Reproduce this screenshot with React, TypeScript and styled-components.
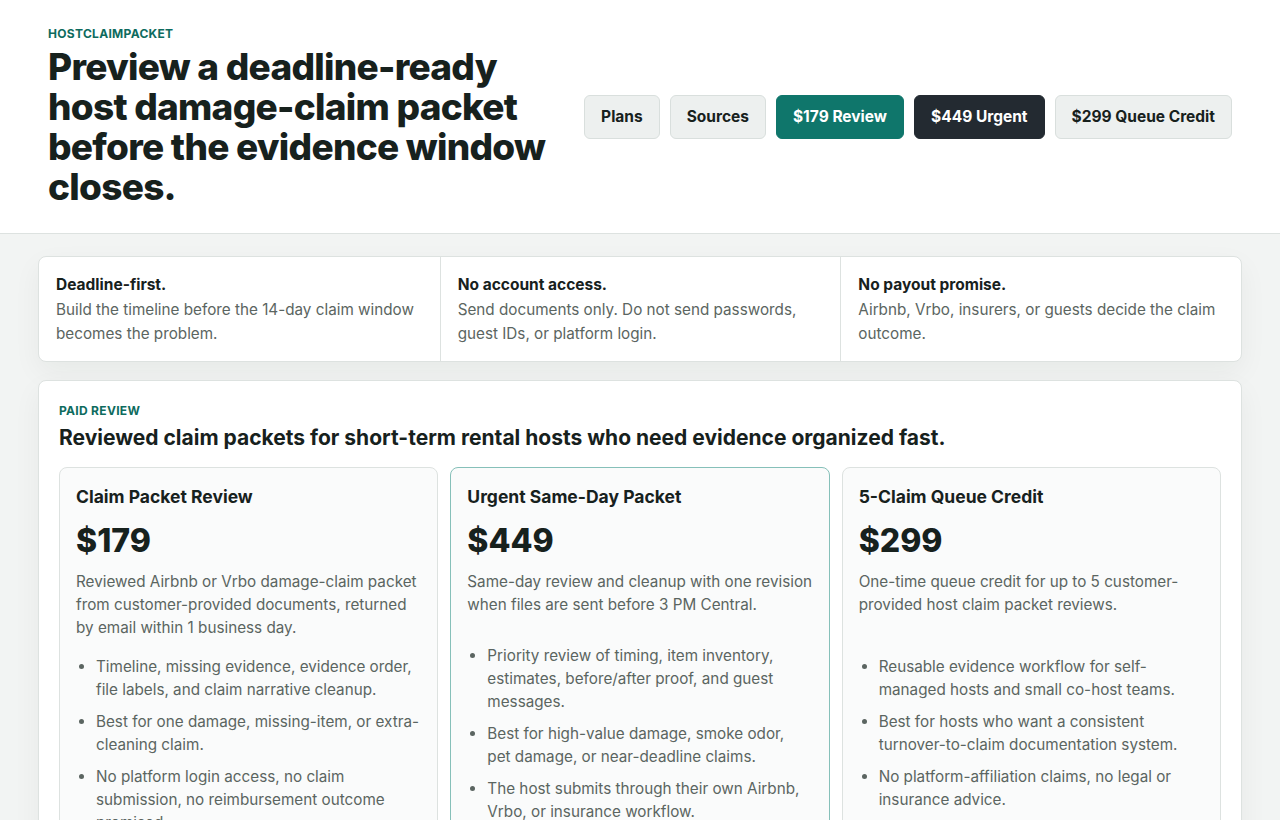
import React from "react";
import styled, { createGlobalStyle } from "styled-components";

const Global = createGlobalStyle`
  * { box-sizing: border-box; }
  html, body { margin: 0; padding: 0; }
  body {
    background: #f2f4f3;
    font-family: Inter, "Noto Sans", "Liberation Sans", sans-serif;
    color: #17211d;
  }
`;

const Header = styled.header`
  background: #ffffff;
  border-bottom: 1px solid #dde2e0;
  padding: 26px 48px 26px;
  display: grid;
  grid-template-columns: minmax(0, 1fr) auto;
  align-items: center;
  column-gap: 32px;
`;

const Brand = styled.div``;

const Eyebrow = styled.div`
  font-size: 12px;
  line-height: 16px;
  font-weight: 700;
  letter-spacing: 0.025em;
  color: #0e6b5e;
  text-transform: uppercase;
`;

const Title = styled.h1`
  margin: 5px 0 0;
  font-size: 37px;
  line-height: 40px;
  font-weight: 800;
  letter-spacing: -0.02em;
  color: #17211d;
`;

const Nav = styled.nav`
  display: flex;
  gap: 10px;
`;

const NavButton = styled.a<{ $tone?: "plain" | "teal" | "dark" }>`
  display: inline-flex;
  align-items: center;
  height: 44px;
  padding: 0 16px;
  border-radius: 6px;
  font-size: 15.5px;
  font-weight: 700;
  text-decoration: none;
  cursor: pointer;
  border: 1px solid
    ${(p) => (p.$tone === "teal" ? "#0f766b" : p.$tone === "dark" ? "#232a31" : "#d9dfdd")};
  background: ${(p) => (p.$tone === "teal" ? "#0f766b" : p.$tone === "dark" ? "#232a31" : "#edf0ef")};
  color: ${(p) => (p.$tone === "plain" || !p.$tone ? "#17211d" : "#ffffff")};
`;

const Main = styled.main`
  padding: 22px 38px 40px;
  display: flex;
  flex-direction: column;
  gap: 18px;
`;

const Strip = styled.section`
  display: grid;
  grid-template-columns: repeat(3, 1fr);
  background: #ffffff;
  border: 1px solid #dde2e0;
  border-radius: 8px;
  box-shadow: 0 10px 28px rgba(20, 30, 26, 0.05);
  overflow: hidden;
`;

const StripCell = styled.div`
  padding: 17px 17px 15px;
  & + & { border-left: 1px solid #dde2e0; }
`;

const StripTitle = styled.div`
  font-size: 15.5px;
  line-height: 22px;
  font-weight: 700;
  color: #17211d;
  margin-bottom: 2px;
`;

const StripText = styled.p`
  margin: 0;
  font-size: 15.25px;
  line-height: 24px;
  color: #5b6561;
`;

const Pricing = styled.section`
  background: #ffffff;
  border: 1px solid #dde2e0;
  border-radius: 8px;
  box-shadow: 0 10px 28px rgba(20, 30, 26, 0.05);
  padding: 22px 20px 24px;
`;

const SectionTitle = styled.h2`
  margin: 5px 0 15px;
  font-size: 21px;
  line-height: 28px;
  font-weight: 700;
  color: #17211d;
`;

const Cards = styled.div`
  display: grid;
  grid-template-columns: repeat(3, 1fr);
  gap: 12px;
`;

const Card = styled.article<{ $featured?: boolean }>`
  background: #fafbfb;
  border: 1px solid ${(p) => (p.$featured ? "#86c0b9" : "#dde2e0")};
  border-radius: 8px;
  padding: 17px 16px 20px;
`;

const CardTitle = styled.h3`
  margin: 0;
  font-size: 17.5px;
  line-height: 24px;
  font-weight: 700;
  color: #17211d;
`;

const Price = styled.div`
  margin-top: 12px;
  font-size: 32px;
  line-height: 40px;
  font-weight: 800;
  color: #17211d;
`;

const Desc = styled.p`
  margin: 9px 0 0;
  font-size: 15.25px;
  line-height: 23px;
  color: #5b6561;
`;

const Bullets = styled.ul<{ $gap: number }>`
  margin: ${(p) => p.$gap}px 0 0;
  padding-left: 20px;
  color: #5b6561;
  font-size: 15.25px;
  line-height: 23px;
  li + li { margin-top: 9px; }
  li::marker { color: #5b6561; }
`;

const facts = [
  {
    title: "Deadline-first.",
    text: "Build the timeline before the 14-day claim window becomes the problem.",
  },
  {
    title: "No account access.",
    text: "Send documents only. Do not send passwords, guest IDs, or platform login.",
  },
  {
    title: "No payout promise.",
    text: "Airbnb, Vrbo, insurers, or guests decide the claim outcome.",
  },
];

const plans = [
  {
    name: "Claim Packet Review",
    price: "$179",
    desc: "Reviewed Airbnb or Vrbo damage-claim packet from customer-provided documents, returned by email within 1 business day.",
    gap: 16,
    bullets: [
      "Timeline, missing evidence, evidence order, file labels, and claim narrative cleanup.",
      "Best for one damage, missing-item, or extra-cleaning claim.",
      "No platform login access, no claim submission, no reimbursement outcome promised.",
    ],
  },
  {
    name: "Urgent Same-Day Packet",
    price: "$449",
    desc: "Same-day review and cleanup with one revision when files are sent before 3 PM Central.",
    gap: 28,
    featured: true,
    bullets: [
      "Priority review of timing, item inventory, estimates, before/after proof, and guest messages.",
      "Best for high-value damage, smoke odor, pet\u00a0damage, or near-deadline claims.",
      "The host submits through their own Airbnb, Vrbo, or insurance workflow.",
    ],
  },
  {
    name: "5-Claim Queue Credit",
    price: "$299",
    desc: "One-time queue credit for up to 5 customer-provided host claim packet reviews.",
    gap: 39,
    bullets: [
      "Reusable evidence workflow for self-managed hosts and small co-host teams.",
      "Best for hosts who want a consistent turnover-to-claim documentation system.",
      "No platform-affiliation claims, no legal or insurance advice.",
    ],
  },
];

export default function App() {
  return (
    <>
      <Global />
      <Header>
        <Brand>
          <Eyebrow>HostClaimPacket</Eyebrow>
          <Title>Preview a deadline-ready host damage-claim packet before the evidence window closes.</Title>
        </Brand>
        <Nav>
          <NavButton>Plans</NavButton>
          <NavButton>Sources</NavButton>
          <NavButton $tone="teal">$179 Review</NavButton>
          <NavButton $tone="dark">$449 Urgent</NavButton>
          <NavButton>$299 Queue Credit</NavButton>
        </Nav>
      </Header>
      <Main>
        <Strip>
          {facts.map((f) => (
            <StripCell key={f.title}>
              <StripTitle>{f.title}</StripTitle>
              <StripText>{f.text}</StripText>
            </StripCell>
          ))}
        </Strip>
        <Pricing>
          <Eyebrow>Paid review</Eyebrow>
          <SectionTitle>Reviewed claim packets for short-term rental hosts who need evidence organized fast.</SectionTitle>
          <Cards>
            {plans.map((p) => (
              <Card key={p.name} $featured={p.featured}>
                <CardTitle>{p.name}</CardTitle>
                <Price>{p.price}</Price>
                <Desc>{p.desc}</Desc>
                <Bullets $gap={p.gap}>
                  {p.bullets.map((b) => (
                    <li key={b}>{b}</li>
                  ))}
                </Bullets>
              </Card>
            ))}
          </Cards>
        </Pricing>
      </Main>
    </>
  );
}
